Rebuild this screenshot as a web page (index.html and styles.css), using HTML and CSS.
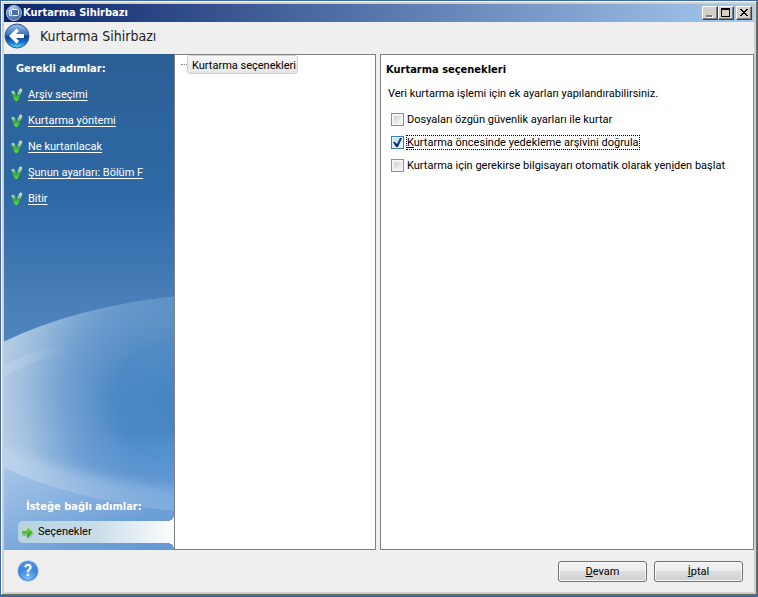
FILE: index.html
```html
<!DOCTYPE html>
<html lang="tr">
<head>
<meta charset="utf-8">
<title>Kurtarma Sihirbazı</title>
<link rel="stylesheet" href="styles.css">
</head>
<body>
<div class="window">
  <header class="titlebar">
    <svg class="app-icon" viewBox="0 0 16 16" aria-hidden="true">
      <defs><radialGradient id="app" cx=".4" cy=".25" r=".8"><stop offset="0" stop-color="#c9d8ea"/><stop offset=".6" stop-color="#5f86b8"/><stop offset="1" stop-color="#3a6098"/></radialGradient></defs>
      <circle cx="8" cy="8" r="7.5" fill="url(#app)" stroke="#a9bfda"/>
      <path d="M3 5h3v1H4v4h1v1H3z" fill="#dce7f4"/>
      <rect x="5.500" y="4.500" width="7" height="6" rx="1" fill="#4a72a8" stroke="#f2f6fb"/>
    </svg>
    <h1 class="title">Kurtarma Sihirbazı</h1>
    <div class="window-buttons">
      <button class="wb" type="button" aria-label="Simge durumuna küçült"><svg viewBox="0 0 12 10"><path d="M3 8h6v2H3z" fill="#fff"/><path d="M2 7h6v2H2z" fill="#808080"/></svg></button>
      <button class="wb" type="button" aria-label="Ekranı kapla"><svg viewBox="0 0 12 10"><path d="M1 0h9v9H1zM2 2v6h7V2z" fill="#000" fill-rule="evenodd"/></svg></button>
      <button class="wb wb-close" type="button" aria-label="Kapat"><svg viewBox="0 0 12 10"><path d="M2 1h2v1h1v1h2V2h1V1h2v1H9v1H8v1H7v1h1v1h1v1h1v1H8V7H7V6H5v1H4v1H2V7h1V6h1V5h1V4H4V3H3V2H2z" fill="#000"/></svg></button>
    </div>
  </header>

  <div class="heading">
    <button class="back" type="button" aria-label="Geri">
      <svg viewBox="0 0 26 26">
        <defs><linearGradient id="bk" x1="0" y1="0" x2="0" y2="1"><stop offset="0" stop-color="#9cbfe8"/><stop offset=".45" stop-color="#3a70bd"/><stop offset=".52" stop-color="#0a3f98"/><stop offset=".75" stop-color="#1470c8"/><stop offset="1" stop-color="#5ce0ff"/></linearGradient></defs>
        <circle cx="13" cy="13" r="12" fill="url(#bk)" stroke="#31598f"/>
        <path d="M5 13l7.500-7.500 2.500 2.500-3 3H20v4h-8l3 3-2.500 2.500z" fill="#fff"/>
      </svg>
    </button>
    <h2 class="heading-text">Kurtarma Sihirbazı</h2>
  </div>

  <div class="content">
    <nav class="sidebar">
      <svg class="sky" viewBox="0 0 170 495" preserveAspectRatio="none" aria-hidden="true">
        <defs>
          <linearGradient id="sk" x1="0" y1="0" x2="0" y2="1"><stop offset="0" stop-color="#2a5f95"/><stop offset=".27" stop-color="#2e68a4"/><stop offset=".4" stop-color="#3b74b0"/><stop offset=".5" stop-color="#4a80b9"/><stop offset="1" stop-color="#5f96d2"/></linearGradient>
          <radialGradient id="orb" gradientUnits="userSpaceOnUse" cx="0" cy="0" r="1" gradientTransform="translate(175 345) scale(180 160)"><stop offset="0" stop-color="#4585c4"/><stop offset=".35" stop-color="#4b88c5"/><stop offset=".65" stop-color="#76a3d3"/><stop offset=".88" stop-color="#a3c2e1"/><stop offset="1" stop-color="#b3cce4"/></radialGradient>
          <linearGradient id="shade" x1="0" y1="0" x2="1" y2="0"><stop offset="0" stop-color="#5c92c6" stop-opacity="0"/><stop offset="1" stop-color="#5c90c2" stop-opacity=".95"/></linearGradient>
          <linearGradient id="shadeV" x1="0" y1="0" x2="0" y2="1"><stop offset="0" stop-color="#fff"/><stop offset="1" stop-color="#000"/></linearGradient>
          <mask id="top"><rect x="0" y="240" width="170" height="105" fill="url(#shadeV)"/></mask>
          <linearGradient id="lift" x1="0" y1="0" x2="1" y2=".3"><stop offset=".1" stop-color="#5590d3" stop-opacity="0"/><stop offset="1" stop-color="#5d98d6" stop-opacity=".8"/></linearGradient>
          <linearGradient id="low" x1="0" y1="0" x2="1" y2="1"><stop offset="0" stop-color="#a6c6e9"/><stop offset=".7" stop-color="#6d9fd7"/><stop offset="1" stop-color="#6598d4"/></linearGradient>
          <linearGradient id="glow" x1="0" y1="0" x2="1" y2="0"><stop offset="0" stop-color="#c5d9ef" stop-opacity=".5"/><stop offset="1" stop-color="#a9c9ee" stop-opacity=".35"/></linearGradient>
          <linearGradient id="ribbon" x1="0" y1="0" x2="1" y2="0"><stop offset="0" stop-color="#c6d8ed" stop-opacity=".4"/><stop offset="1" stop-color="#c6d8ed" stop-opacity="0"/></linearGradient>
          <filter id="soft" x="-20%" y="-30%" width="140%" height="160%"><feGaussianBlur stdDeviation="5"/></filter>
        </defs>
        <rect width="170" height="495" fill="url(#sk)"/>
        <path d="M0 287Q70 253 170 242V495H0z" fill="url(#orb)"/>
        <path d="M0 287Q70 253 170 242V345H0z" fill="url(#shade)" mask="url(#top)"/>
        <path d="M0 311Q28 296 62 289V297Q25 308 0 322z" fill="url(#ribbon)"/>
        <path d="M10 385H200V470H10z" fill="url(#lift)" filter="url(#soft)"/>
        <path d="M-20 385Q75 425 190 435V475Q70 455 -20 413z" fill="url(#glow)" filter="url(#soft)"/>
        <path d="M0 413Q70 445 170 456V495H0z" fill="url(#low)"/>
      </svg>
      <h3 class="steps-title">Gerekli adımlar:</h3>
      <ul class="steps">
        <li><svg class="tick" viewBox="0 0 12 14"><use href="#tick"/></svg><a href="#">Arşiv seçimi</a></li>
        <li><svg class="tick" viewBox="0 0 12 14"><use href="#tick"/></svg><a href="#">Kurtarma yöntemi</a></li>
        <li><svg class="tick" viewBox="0 0 12 14"><use href="#tick"/></svg><a href="#">Ne kurtarılacak</a></li>
        <li><svg class="tick" viewBox="0 0 12 14"><use href="#tick"/></svg><a href="#">Şunun ayarları: Bölüm F</a></li>
        <li><svg class="tick" viewBox="0 0 12 14"><use href="#tick"/></svg><a href="#">Bitir</a></li>
      </ul>
      <h3 class="steps-title optional">İsteğe bağlı adımlar:</h3>
      <div class="current">
        <svg class="go" viewBox="0 0 13 13">
          <defs><linearGradient id="go" x1="0" y1="0" x2="0" y2="1"><stop offset="0" stop-color="#8fdc6a"/><stop offset="1" stop-color="#1d9a1d"/></linearGradient></defs>
          <path d="M7 2.500l6 5-6 5.500v-3H1.500V6H7z" fill="#4c7a82" opacity=".5"/>
          <path d="M5.500.5H7L12 5.700v1L7 12H5.500V8.300H.7V4.200h4.800z" fill="url(#go)" stroke="#d8f0d0" stroke-width=".6"/>
        </svg>
        <span>Seçenekler</span>
      </div>
    </nav>

    <section class="tree">
      <span class="branch"></span><button class="node" type="button">Kurtarma seçenekleri</button>
    </section>

    <main class="options">
      <h3 class="options-title">Kurtarma seçenekleri</h3>
      <p class="intro">Veri kurtarma işlemi için ek ayarları yapılandırabilirsiniz.</p>
      <div class="option"><input type="checkbox" id="o1"><label for="o1">Dosyaları özgün <u>g</u>üvenlik ayarları ile kurtar</label></div>
      <div class="option"><input type="checkbox" id="o2" checked><label class="focused" for="o2"><u>K</u>urtarma öncesinde yedekleme arşivini doğrula</label></div>
      <div class="option"><input type="checkbox" id="o3"><label for="o3">Kurtarma için gerekirse bilgisayarı otomatik olarak yen<u>i</u>den başlat</label></div>
    </main>
  </div>

  <footer class="footer">
    <button class="help" type="button" aria-label="Yardım"><span>?</span></button>
    <button class="btn" type="button"><u>D</u>evam</button>
    <button class="btn" type="button"><u>İ</u>ptal</button>
  </footer>
</div>

<svg class="symbols" aria-hidden="true">
  <defs>
    <linearGradient id="tk" x1="0" y1="0" x2="0" y2="1"><stop offset="0" stop-color="#d5e6dc"/><stop offset=".35" stop-color="#8fcb95"/><stop offset=".55" stop-color="#2fae2f"/><stop offset="1" stop-color="#5be53a"/></linearGradient>
    <symbol id="tick" viewBox="0 0 12 14"><path d="M.3 4Q1.300 1.800 3.500 3.500L5.300 8 8 2Q9.200-.3 10.800 1 11.700 1.800 10.700 4L7.200 11.800Q5.300 14.500 3.300 11.800z" fill="url(#tk)"/></symbol>
  </defs>
</svg>
</body>
</html>
```
FILE: styles.css
```css
* { box-sizing: border-box; }

body {
  margin: 0;
  min-height: 100vh;
  display: flex;
  padding: 1px 1px 2px;
  background: #3c68ad;
  color: #000;
  font: 11px/14px Roboto, "Liberation Sans", sans-serif;
}

h1, h2, h3, p, ul { margin: 0; padding: 0; }
h1, h2, h3 { font-family: "DejaVu Sans Condensed", "DejaVu Sans", sans-serif; }
button { font: inherit; color: inherit; cursor: pointer; }
svg { display: block; }

.symbols { position: absolute; width: 0; height: 0; }

.window {
  flex: 1;
  display: flex;
  flex-direction: column;
  border: 1px solid #fff;
  border-right-color: #6d6b68;
  border-bottom-color: #6d6b68;
  box-shadow: inset 0 0 0 2px #d4d0c8;
  padding: 2px;
  background: #efefef;
}

/* Title bar */
.titlebar {
  display: flex;
  align-items: center;
  height: 18px;
  padding: 0 2px;
  background: linear-gradient(90deg, #0a246a, #a6caf0);
}
.app-icon { width: 16px; height: 16px; }
.title {
  flex: 1;
  padding-left: 1px;
  color: #fff;
  font-size: 11px;
  line-height: 18px;
}
.window-buttons { display: flex; }
.wb {
  width: 16px;
  height: 14px;
  padding: 1px;
  border: 1px solid;
  border-color: #fff #404040 #404040 #fff;
  box-shadow: inset -1px -1px #808080;
  background: #d4d0c8;
}
.wb svg { width: 12px; height: 10px; }
.wb-close { margin-left: 2px; }

.heading {
  display: flex;
  align-items: center;
  height: 32px;
  padding-bottom: 4px;
}
.back { width: 26px; height: 26px; padding: 0; border: 0; background: none; }
.back svg { width: 26px; height: 26px; }
.heading-text {
  padding-left: 10px;
  font-size: 14px;
  font-weight: 400;
  line-height: 20px;
  color: #222;
}

/* Panels */
.content { flex: 1; display: flex; }

.sidebar {
  position: relative;
  flex: 0 0 170px;
  display: flex;
  flex-direction: column;
  padding: 8px 0 7px 7px;
  color: #fff;
}
.sky { position: absolute; inset: 0; width: 100%; height: 100%; }
.steps-title { position: relative; padding-left: 5px; font-size: 11px; line-height: 14px; }
.steps {
  position: relative;
  flex: 1;
  display: flex;
  flex-direction: column;
  gap: 12px;
  padding-top: 12px;
  list-style: none;
}
.steps li { display: flex; align-items: center; gap: 5px; height: 14px; }
.tick { width: 12px; height: 14px; }
.steps a { color: #fff; text-underline-offset: 2px; }
.optional { padding-left: 15px; margin-bottom: 7px; }
.current {
  position: relative;
  display: flex;
  align-items: center;
  gap: 4px;
  height: 22px;
  margin-left: 7px;
  padding-left: 3px;
  border-radius: 5px 0 0 5px;
  background: linear-gradient(90deg, #b5d3e2, #c9dde8 50%, #fdfdfd);
  color: #000;
}
.current::before, .current::after {
  content: "";
  position: absolute;
  right: 0;
  width: 6px;
  height: 6px;
}
.current::before { top: -6px; background: radial-gradient(circle at 0 0, transparent 6px, #fbfcfd 6px); }
.current::after { bottom: -6px; background: radial-gradient(circle at 0 100%, transparent 6px, #fbfcfd 6px); }
.go { width: 13px; height: 13px; }

.tree {
  flex: 0 0 202px;
  display: flex;
  align-items: flex-start;
  margin-right: 4px;
  padding-left: 6px;
  border: 1px solid #808080;
  background: #fff;
}
.branch { width: 6px; margin-top: 9px; border-top: 1px dotted #808080; }
.node {
  height: 19px;
  padding: 2px 1px 0 4px;
  border: 1px solid #d0d0d0;
  border-radius: 3px;
  background: linear-gradient(#f8f8f8, #e6e6e6);
  white-space: nowrap;
}

.options {
  flex: 1;
  min-width: 0;
  padding: 8px 5px;
  border: 1px solid #808080;
  background: #fff;
}
.options-title { font-size: 11px; line-height: 14px; }
.intro { padding: 10px 2px 11px; }
.option {
  display: flex;
  align-items: center;
  gap: 2px;
  height: 15px;
  margin: 0 0 8px 5px;
}
.option input {
  appearance: none;
  flex: none;
  display: grid;
  width: 13px;
  height: 13px;
  margin: 0;
  border: 1px solid #8e8f8f;
  background: linear-gradient(135deg, #cbcfd5, #f6f6f6) 2px 2px / 7px 7px no-repeat, #f4f4f4;
}
.option input:checked {
  border-color: #3c7fb1;
  background: linear-gradient(135deg, #bfe0f4, #f0f9fd) 1px 1px / 9px 9px no-repeat, #e4f4fc;
}
.option input:checked::before {
  content: "";
  width: 11px;
  height: 11px;
  background: #0b2f78;
  clip-path: polygon(1px 5px, 3px 5px, 5px 7px, 8px 1px, 10px 1px, 6px 10px, 4px 10px);
}
.option label {
  padding-top: 1px;
  border: 1px dotted transparent;
  line-height: 12px;
  white-space: nowrap;
}
.option .focused { border-color: #000; }

/* Footer */
.footer {
  display: flex;
  align-items: center;
  gap: 7px;
  height: 42px;
  padding: 0 11px 0 13px;
}
.help {
  width: 22px;
  height: 22px;
  margin-right: auto;
  padding: 0;
  border: 1px solid #b7d3f5;
  border-radius: 50%;
  background: radial-gradient(circle at 50% 90%, #7fc0fa, #3d84dc 55%, #6ea5e8);
  box-shadow: inset 0 0 0 1px #4c80c8;
  color: #fff;
  font-size: 16px;
  font-weight: 700;
  line-height: 20px;
}
.btn {
  width: 89px;
  height: 21px;
  padding: 2px 0 0;
  border: 1px solid #707070;
  border-radius: 3px;
  box-shadow: inset 0 0 0 1px #fafafa;
  background: linear-gradient(#f2f2f2, #ebebeb 49%, #dddddd 50%, #cfcfcf);
}
```
